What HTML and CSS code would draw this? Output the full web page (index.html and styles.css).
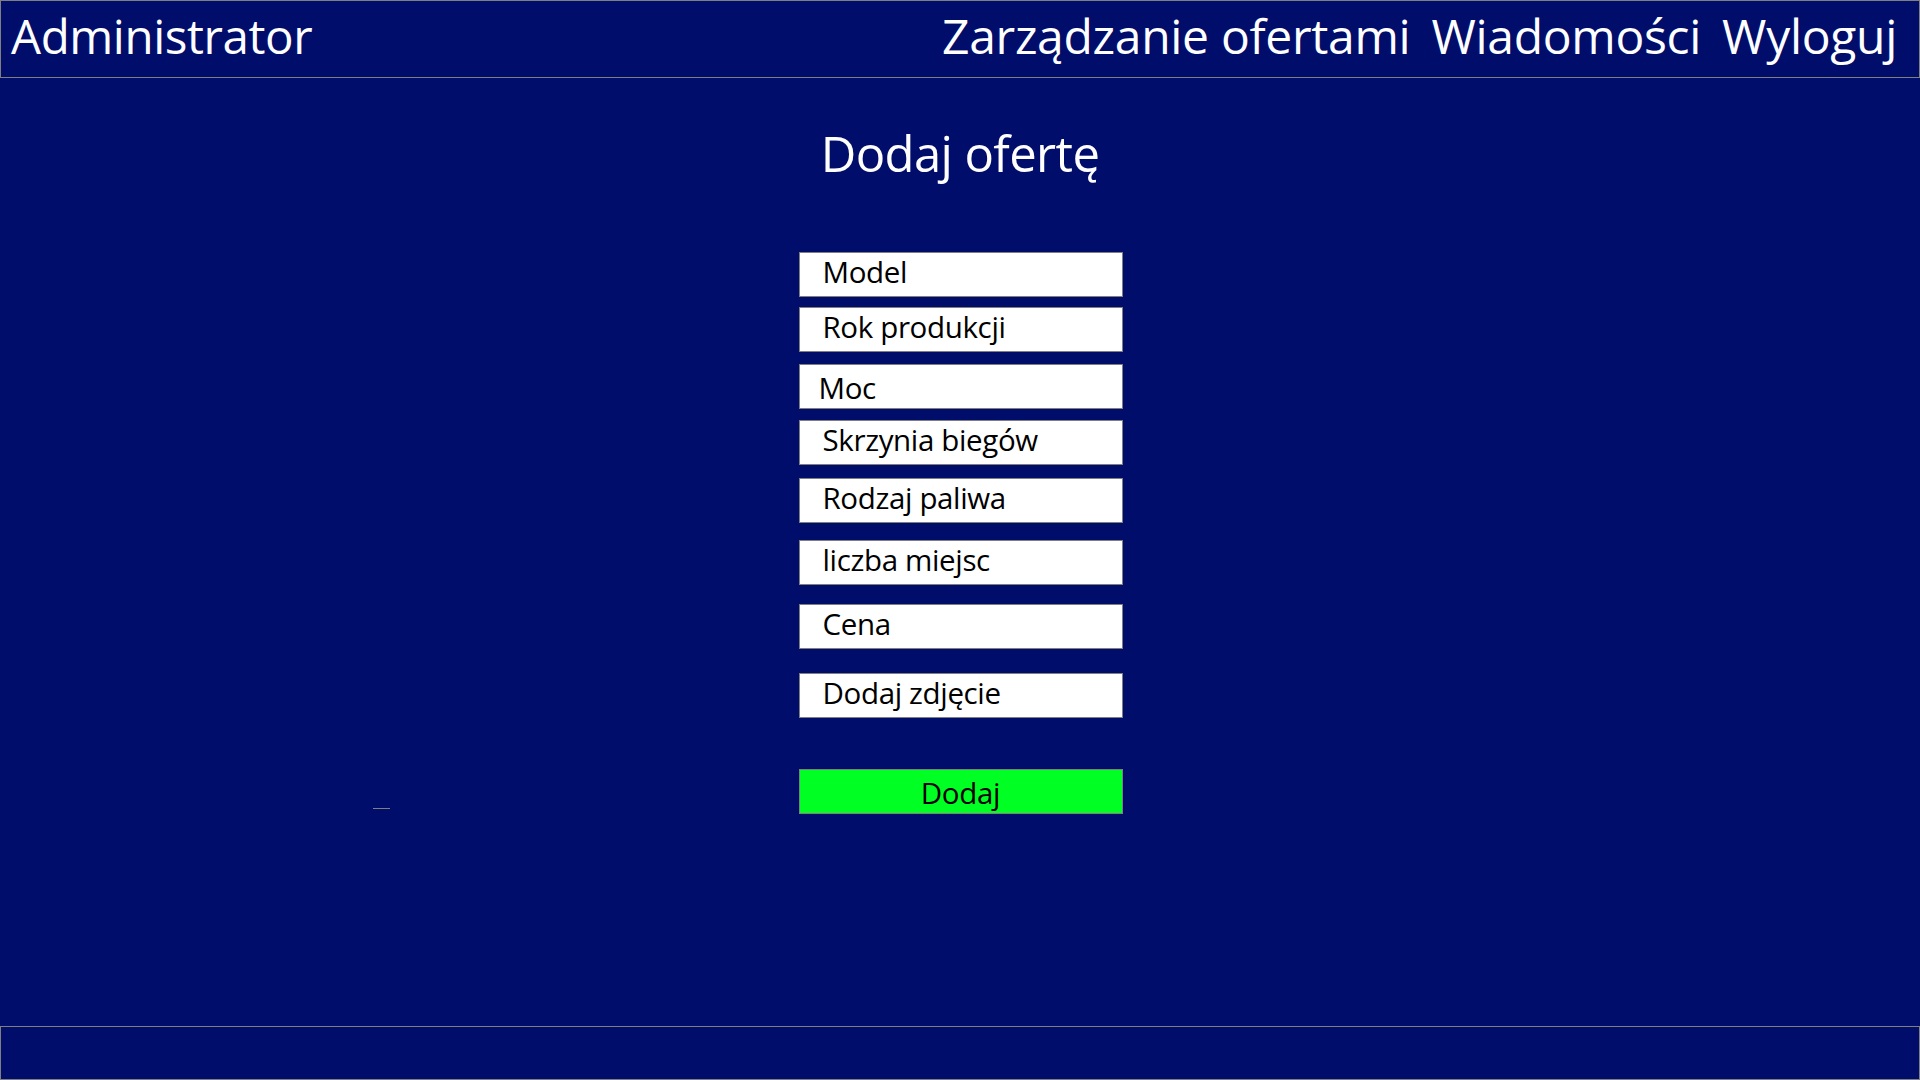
FILE: index.html
```html
<!DOCTYPE html>
<html lang="pl">
<head>
<meta charset="utf-8">
<title>Dodaj ofertę</title>
<link rel="stylesheet" href="styles.css">
</head>
<body>
<div class="page">
  <header class="topbar">
    <div class="brand">Administrator</div>
    <nav class="nav">
      <a class="nav-link" href="#">Zarządzanie ofertami</a>
      <a class="nav-link" href="#">Wiadomości</a>
      <a class="nav-link" href="#">Wyloguj</a>
    </nav>
  </header>
  <main class="main">
    <span class="stray"></span>
    <h1 class="title">Dodaj ofertę</h1>
    <form class="form">
      <div class="field">Model</div>
      <div class="field g10">Rok produkcji</div>
      <div class="field g12 narrow">Moc</div>
      <div class="field g11">Skrzynia biegów</div>
      <div class="field g13">Rodzaj paliwa</div>
      <div class="field g17">liczba miejsc</div>
      <div class="field g19">Cena</div>
      <div class="field g24">Dodaj zdjęcie</div>
      <button type="button" class="submit">Dodaj</button>
    </form>
  </main>
  <footer class="footer"></footer>
</div>
</body>
</html>
```
FILE: styles.css
```css
* { box-sizing: border-box; }
html, body { margin: 0; padding: 0; }
body {
  background: #000d6a;
  font-family: "Open Sans", "Noto Sans", sans-serif;
  color: #fff;
}
.page {
  height: 1080px;
  display: flex;
  flex-direction: column;
}
.topbar {
  height: 78px;
  border: 1px solid #7f7f7f;
  display: flex;
  align-items: center;
  justify-content: space-between;
  padding: 0 22px 6px 10px;
}
.brand {
  font-size: 47.5px;
  line-height: 1;
  letter-spacing: -0.4px;
}
.nav {
  display: flex;
  gap: 21px;
}
.nav-link {
  color: #fff;
  text-decoration: none;
  font-size: 48px;
  line-height: 1;
  letter-spacing: -0.3px;
}
.main {
  flex: 1;
  position: relative;
  display: flex;
  flex-direction: column;
  align-items: center;
}
.title {
  margin: 40px 0 0;
  height: 70px;
  font-weight: 400;
  font-size: 49px;
  line-height: 70px;
  letter-spacing: -0.6px;
}
.form {
  margin-top: 64px;
  display: flex;
  flex-direction: column;
  width: 324px;
  margin-left: 1px;
}
.field {
  height: 45px;
  background: #fff;
  border: 1px solid #7f7f7f;
  color: #000;
  font-size: 29.5px;
  line-height: 37px;
  padding-left: 23px;
  letter-spacing: -0.35px;
}
.field.narrow { padding-left: 19px; line-height: 46px; }
.g10 { margin-top: 10px; }
.g11 { margin-top: 11px; }
.g12 { margin-top: 12px; }
.g13 { margin-top: 13px; }
.g17 { margin-top: 17px; }
.g19 { margin-top: 19px; }
.g24 { margin-top: 24px; }
.submit {
  margin-top: 51px;
  height: 45px;
  background: #00ff22;
  border: 1px solid #7f7f7f;
  color: #000;
  font-family: inherit;
  font-size: 29.5px;
  line-height: 45px;
  padding: 0;
  letter-spacing: -0.3px;
}
.stray {
  position: absolute;
  left: 373px;
  top: 730px;
  width: 17px;
  height: 1px;
  background: #7f7f7f;
}
.footer {
  height: 54px;
  border: 1px solid #7f7f7f;
}
```
